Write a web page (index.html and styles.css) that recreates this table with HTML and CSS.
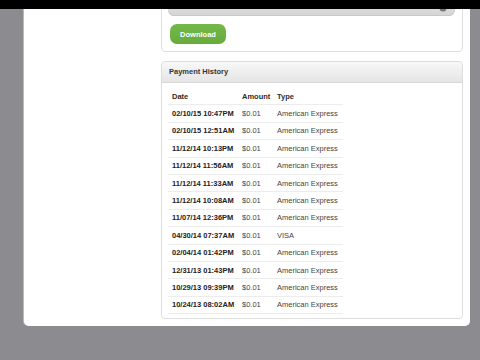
FILE: index.html
```html
<!DOCTYPE html>
<html lang="en">
<head>
<meta charset="UTF-8" />
<meta name="viewport" content="width=device-width, initial-scale=1" />
<title>Billing</title>
<link rel="stylesheet" href="styles.css">
</head>
<body>
<div class="statusbar"></div>

<div class="page">
  <div class="sidebar"></div>

  <div class="content">
    <div class="card">
      <div class="selector">
        <span class="selector-label">Edit Details</span>
        <svg class="selector-icon" width="8" height="8" viewBox="0 0 8 8"><circle cx="4" cy="4" r="3.5" fill="#777"/></svg>
      </div>
      <button class="btn-green">Download</button>
    </div>

    <div class="card history">
      <div class="card-header">Payment History</div>
      <table class="payments">
        <thead>
          <tr><th>Date</th><th>Amount</th><th>Type</th></tr>
        </thead>
        <tbody>
          <tr><td class="date">02/10/15 10:47PM</td><td>$0.01</td><td>American Express</td></tr>
          <tr><td class="date">02/10/15 12:51AM</td><td>$0.01</td><td>American Express</td></tr>
          <tr><td class="date">11/12/14 10:13PM</td><td>$0.01</td><td>American Express</td></tr>
          <tr><td class="date">11/12/14 11:56AM</td><td>$0.01</td><td>American Express</td></tr>
          <tr><td class="date">11/12/14 11:33AM</td><td>$0.01</td><td>American Express</td></tr>
          <tr><td class="date">11/12/14 10:08AM</td><td>$0.01</td><td>American Express</td></tr>
          <tr><td class="date">11/07/14 12:36PM</td><td>$0.01</td><td>American Express</td></tr>
          <tr><td class="date">04/30/14 07:37AM</td><td>$0.01</td><td>VISA</td></tr>
          <tr><td class="date">02/04/14 01:42PM</td><td>$0.01</td><td>American Express</td></tr>
          <tr><td class="date">12/31/13 01:43PM</td><td>$0.01</td><td>American Express</td></tr>
          <tr><td class="date">10/29/13 09:39PM</td><td>$0.01</td><td>American Express</td></tr>
          <tr><td class="date">10/24/13 08:02AM</td><td>$0.01</td><td>American Express</td></tr>
        </tbody>
      </table>
    </div>
  </div>
</div>
</body>
</html>
```

FILE: styles.css
```css
html, body {
  height: 100%;
}
body {
  margin: 0;
  overflow: hidden;
  background: #8b8b90;
  font-family: "Liberation Sans", Arial, sans-serif;
  font-size: 7.5px;
  color: #333;
}

/* device status bar sits over the scrolled page */
.statusbar {
  position: fixed;
  top: 0;
  left: 0;
  right: 0;
  height: 9px;
  background: #000;
  z-index: 10;
}

.page {
  display: flex;
  margin: -20px 0 0 24px;
  width: 446px;
  padding-bottom: 7px;
  background: #fff;
  border-radius: 0 0 5px 5px;
  box-shadow: -1px 0 0 #b9b9bd;
}
.sidebar {
  width: 137px;
  flex: none;
}
.content {
  width: 302px;
  display: flex;
  flex-direction: column;
  gap: 9px;
}

.card {
  border: 1px solid #dedede;
  border-radius: 4px;
  background: #fff;
  padding: 7px 7px 7px 6px;
}
.selector {
  height: 28px;
  border-radius: 0 0 6px 6px;
  background: linear-gradient(#e2e2e2, #d6d6d6);
  box-shadow: inset 0 -1px 0 #c8c8c8;
  display: flex;
  align-items: flex-end;
  justify-content: center;
  position: relative;
}
.selector-label {
  font-weight: bold;
  color: #555;
  line-height: 12px;
  padding-bottom: 5px;
}
.selector-icon {
  position: absolute;
  right: 8px;
  bottom: 4px;
}
.btn-green {
  display: block;
  margin-top: 8px;
  margin-left: 2px;
  width: 56px;
  height: 20px;
  padding: 0;
  border: none;
  border-radius: 7px;
  background: linear-gradient(#73b848, #66ab3c);
  color: #fff;
  font-family: inherit;
  font-size: 7.5px;
  font-weight: bold;
}

.history {
  padding: 0 0 4px 0;
}
.card-header {
  height: 20px;
  line-height: 20px;
  padding-left: 7px;
  font-weight: bold;
  color: #333;
  background: linear-gradient(#f8f8f8, #e5e5e5);
  border-bottom: 1px solid #d8d8d8;
  border-radius: 4px 4px 0 0;
}

.payments {
  border-collapse: collapse;
  margin: 5px 0 0 6px;
  width: 175px;
  table-layout: fixed;
}
.payments th,
.payments td {
  height: 16.4px;
  padding: 0 0 0 4px;
  text-align: left;
  border-bottom: 1px solid #ececec;
  white-space: nowrap;
}
.payments th {
  font-weight: bold;
  color: #2b2b2b;
}
.payments th:nth-child(1) { width: 66px; }
.payments th:nth-child(2) { width: 31px; }
.payments td {
  color: #444;
}
.payments td.date {
  font-weight: bold;
  color: #222;
}
```
